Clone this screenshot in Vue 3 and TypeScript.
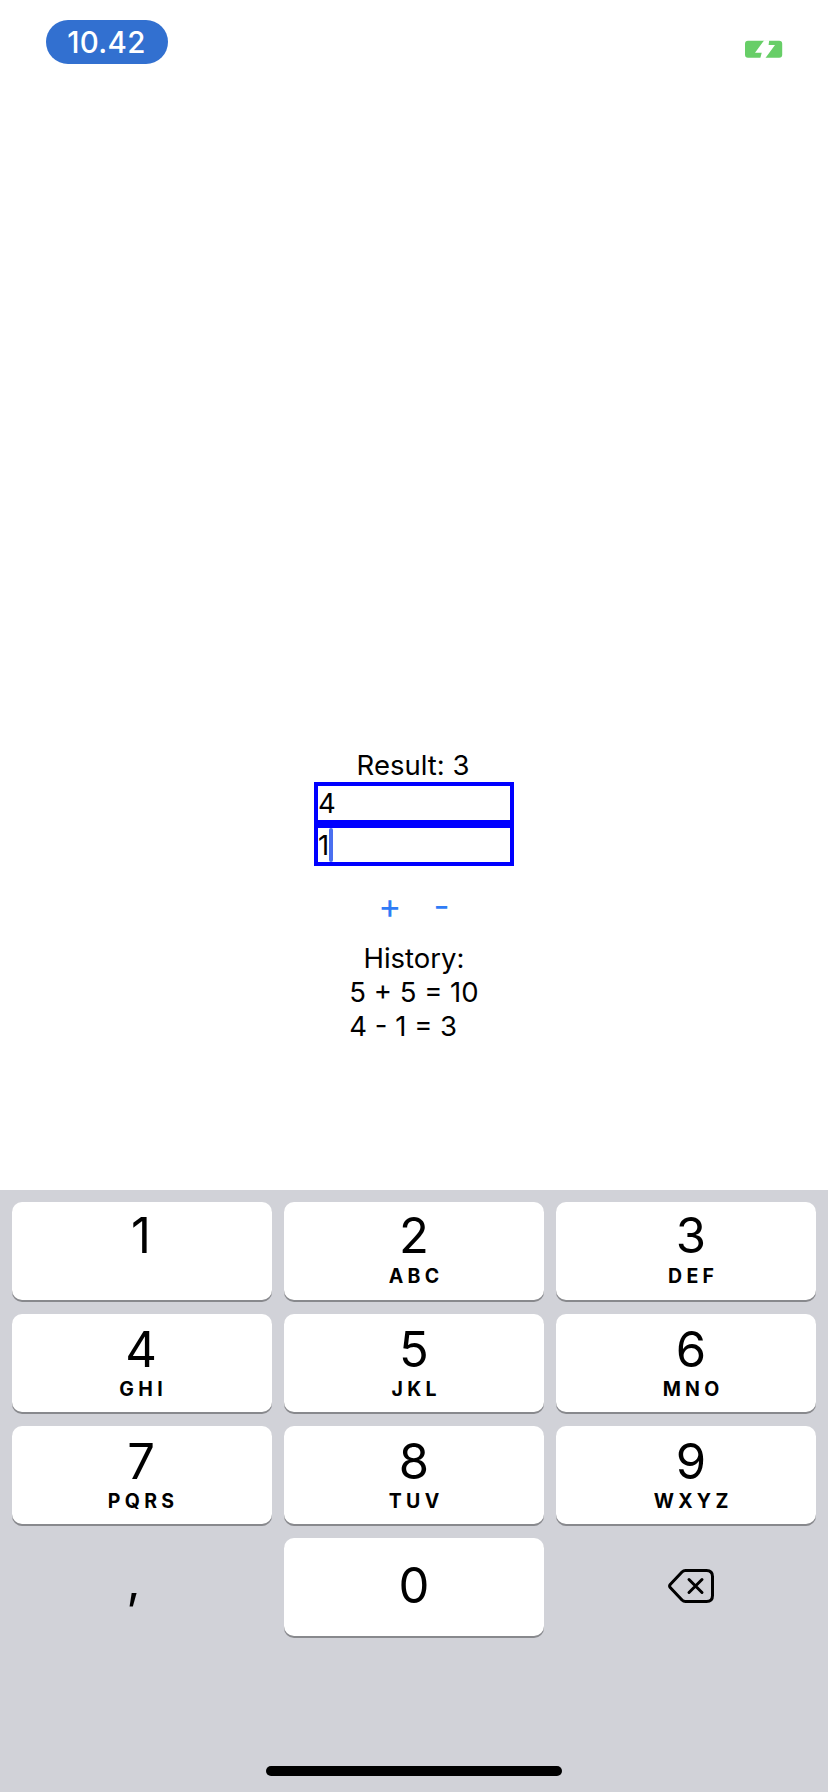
<script setup lang="ts">
import { ref } from 'vue'

interface Key {
  digit: string
  letters?: string
}

const first = ref('4')
const second = ref('1')
const result = ref(3)
const history = ref<string[]>(['5 + 5 = 10', '4 - 1 = 3'])

const rows: Key[][] = [
  [{ digit: '1' }, { digit: '2', letters: 'ABC' }, { digit: '3', letters: 'DEF' }],
  [{ digit: '4', letters: 'GHI' }, { digit: '5', letters: 'JKL' }, { digit: '6', letters: 'MNO' }],
  [{ digit: '7', letters: 'PQRS' }, { digit: '8', letters: 'TUV' }, { digit: '9', letters: 'WXYZ' }],
]
</script>

<template>
  <div class="screen">
    <header class="status">
      <div class="clock">10.42</div>
      <svg class="battery" width="38" height="18" viewBox="0 0 38 18">
        <rect x="0" y="0.7" width="37.2" height="17" rx="3" fill="#67ce67" />
        <path d="M19.3 0.2H24.2L23.6 5H30L20.3 18.2H15.3L16.7 12.7H10Z" fill="#fff" />
      </svg>
    </header>

    <main class="calculator">
      <div class="line result">Result: {{ result }}</div>
      <div class="field">{{ first }}</div>
      <div class="field">{{ second }}<span class="caret"></span></div>
      <div class="operators">
        <button class="operator">+</button>
        <button class="operator">-</button>
      </div>
      <div class="line">History:</div>
      <div class="history">
        <div v-for="entry in history" :key="entry" class="line">{{ entry }}</div>
      </div>
    </main>

    <section class="keyboard">
      <div v-for="(row, i) in rows" :key="i" class="row" :class="{ top: i === 0 }">
        <button v-for="key in row" :key="key.digit" class="key">
          <span class="digit">{{ key.digit }}</span>
          <span class="letters">{{ key.letters }}</span>
        </button>
      </div>
      <div class="row last">
        <button class="key plain comma">,</button>
        <button class="key"><span class="digit">0</span></button>
        <button class="key plain">
          <svg width="48" height="36" viewBox="0 0 48 36" fill="none" stroke="#000" stroke-width="3" stroke-linecap="round" stroke-linejoin="round">
            <path d="M18.5 2.5H39.5Q45.5 2.5 45.5 8.5V27.5Q45.5 33.5 39.5 33.5H18.5Q16.5 33.5 15 32L3.2 19.5Q2 18 3.2 16.5L15 4Q16.5 2.5 18.5 2.5Z" />
            <path d="M22 11.5L35 24.5M35 11.5L22 24.5" />
          </svg>
        </button>
      </div>
      <div class="home"></div>
    </section>
  </div>
</template>

<style>
body {
  margin: 0;
  background: #fff;
}
</style>

<style scoped>
.screen {
  width: 828px;
  height: 1792px;
  display: flex;
  flex-direction: column;
  background: #fff;
  color: #000;
  font-family: Inter, "Liberation Sans", sans-serif;
  overflow: hidden;
}
button {
  border: 0;
  padding: 0;
  margin: 0;
  background: none;
  font: inherit;
  color: inherit;
}
.status {
  box-sizing: border-box;
  height: 88px;
  padding: 20px 45px 0 46px;
  display: flex;
  justify-content: space-between;
  align-items: flex-start;
}
.clock {
  box-sizing: border-box;
  width: 122px;
  height: 44px;
  padding-right: 1px;
  border-radius: 22px;
  background: #3270d0;
  color: #fff;
  font-size: 29.5px;
  font-weight: 500;
  line-height: 45px;
  letter-spacing: 0.3px;
  text-align: center;
}
.battery {
  margin-top: 20px;
}
.calculator {
  flex: 1;
  padding-top: 660px;
  display: flex;
  flex-direction: column;
  align-items: center;
  font-size: 27.5px;
}
.line {
  height: 34px;
  line-height: 34px;
  white-space: pre;
}
.result {
  padding-right: 2px;
}
.field {
  box-sizing: border-box;
  width: 200px;
  height: 42px;
  border: 4px solid #00f;
  display: flex;
  align-items: center;
  line-height: 34px;
}
.caret {
  width: 4px;
  height: 34px;
  border-radius: 2px;
  background: #4a6ff0;
}
.operators {
  box-sizing: border-box;
  height: 75px;
  padding-top: 2px;
  display: flex;
  align-items: center;
  justify-content: center;
  gap: 32px;
}
.operator {
  color: #2f7cf6;
  font-size: 35px;
  line-height: 40px;
}
.keyboard {
  box-sizing: border-box;
  height: 602px;
  padding: 12px 12px 16px;
  background: #d1d2d8;
  display: flex;
  flex-direction: column;
  gap: 14px;
}
.row {
  display: flex;
  gap: 12px;
}
.key {
  box-sizing: border-box;
  width: 260px;
  height: 98px;
  border-radius: 10px;
  background: #fff;
  box-shadow: 0 2px 0 #88898d;
  display: flex;
  flex-direction: column;
  align-items: center;
  padding-top: 6px;
}
.key:first-child {
  padding-right: 2px;
}
.key:last-child {
  padding-left: 10px;
}
.top .key {
  padding-top: 4px;
}
.digit {
  font-size: 49px;
  line-height: 60px;
  height: 60px;
}
.letters {
  font-size: 19.5px;
  font-weight: 700;
  line-height: 20px;
  letter-spacing: 4.3px;
  margin-top: -1px;
  margin-right: -4.3px;
}
.top .letters {
  margin-top: 0;
}
.last .key {
  padding-top: 0;
  padding-bottom: 2px;
  justify-content: center;
}
.plain {
  background: none;
  box-shadow: none;
}
.last .comma {
  font-size: 49px;
  padding-right: 17px;
  padding-bottom: 14px;
}
.home {
  width: 296px;
  height: 10px;
  border-radius: 5px;
  background: #000;
  margin: auto auto 0;
}
</style>
